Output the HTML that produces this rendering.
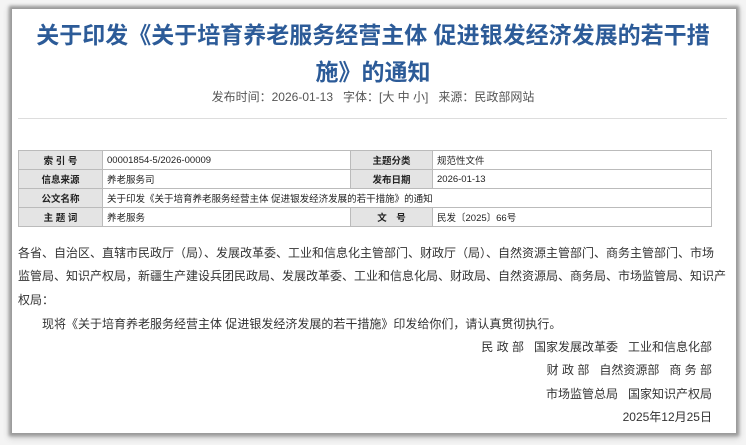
<!DOCTYPE html>
<html><head><meta charset="utf-8"><style>
html,body{margin:0;padding:0;width:746px;height:445px;background:#f4f4f4;overflow:hidden;font-family:"Liberation Sans","Noto Sans CJK SC",sans-serif;}
.panel{position:absolute;left:12px;top:9px;width:724px;height:424px;background:#fff;box-shadow:0 0 3px 3px #9a9a9a,0 2px 6px 3px #c8c8c8;}
.t{position:absolute;left:0;width:746px;text-align:center;color:#2c5b98;font-weight:bold;font-size:23px;line-height:30px;white-space:nowrap;}
.meta{position:absolute;left:0;width:746px;top:88px;text-align:center;font-size:12px;color:#555;}
.hr{position:absolute;left:18px;top:118px;width:709px;height:1px;background:#ddd;}
table{position:absolute;left:18px;top:150px;border-collapse:collapse;font-size:9.5px;color:#222;}
td{border:1px solid #bbb;height:18px;padding:0 4px;}
td.k{background:#e4e4e4;font-weight:bold;text-align:center;}
.ln{position:absolute;left:18px;width:694px;font-size:12px;color:#333;text-align:justify;text-align-last:justify;white-space:nowrap;line-height:16px;}
.r{position:absolute;right:34px;font-size:12px;color:#333;white-space:pre;line-height:16px;}
</style></head><body>
<div class="panel"></div>
<div class="t" style="top:20px">关于印发《关于培育养老服务经营主体 促进银发经济发展的若干措</div>
<div class="t" style="top:57px">施》的通知</div>
<div class="meta">发布时间：2026-01-13&nbsp;&nbsp;&nbsp;字体：[大 中 小]&nbsp;&nbsp;&nbsp;来源：民政部网站</div>
<div class="hr"></div>
<table>
<tr><td class="k" style="width:75px">索 引 号</td><td style="width:239px">00001854-5/2026-00009</td><td class="k" style="width:73px">主题分类</td><td style="width:270px">规范性文件</td></tr>
<tr><td class="k">信息来源</td><td>养老服务司</td><td class="k">发布日期</td><td>2026-01-13</td></tr>
<tr><td class="k">公文名称</td><td colspan="3">关于印发《关于培育养老服务经营主体 促进银发经济发展的若干措施》的通知</td></tr>
<tr><td class="k">主 题 词</td><td>养老服务</td><td class="k">文　号</td><td>民发〔2025〕66号</td></tr>
</table>
<div class="ln" style="top:245px">各省、自治区、直辖市民政厅（局）、发展改革委、工业和信息化主管部门、财政厅（局）、自然资源主管部门、商务主管部门、市场</div>
<div class="ln" style="top:268px">监管局、知识产权局，新疆生产建设兵团民政局、发展改革委、工业和信息化局、财政局、自然资源局、商务局、市场监管局、知识产</div>
<div class="ln" style="top:292px;text-align-last:left">权局：</div>
<div class="ln" style="top:316px;left:42px;text-align-last:left">现将《关于培育养老服务经营主体 促进银发经济发展的若干措施》印发给你们，请认真贯彻执行。</div>
<div class="r" style="top:339px">民 政 部   国家发展改革委   工业和信息化部</div>
<div class="r" style="top:362px">财 政 部   自然资源部   商 务 部</div>
<div class="r" style="top:386px">市场监管总局   国家知识产权局</div>
<div class="r" style="top:409px">2025年12月25日</div>
</body></html>
